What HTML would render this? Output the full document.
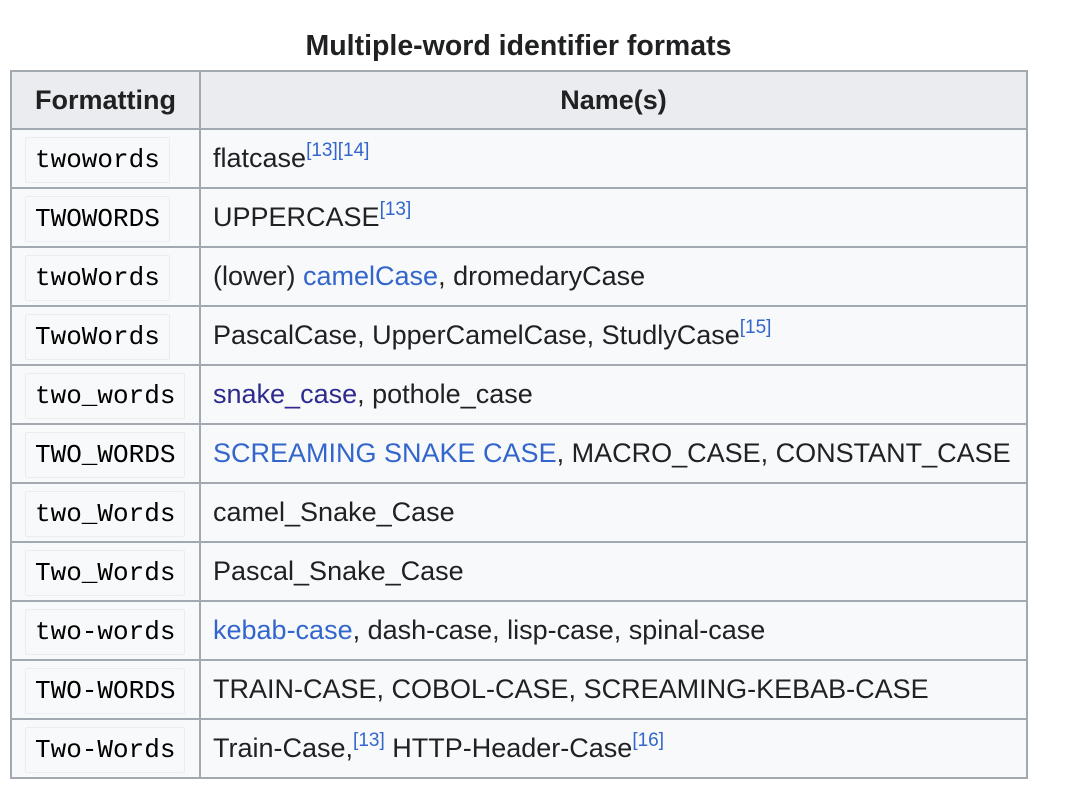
<!DOCTYPE html>
<html><head><meta charset="utf-8"><style>
body{margin:0;background:#fff;width:1080px;height:812px;overflow:hidden;font-family:"Liberation Sans",Arial,sans-serif;color:#202122}
.cap{position:absolute;left:10px;width:1017px;top:30px;text-align:center;font-weight:bold;font-size:28.5px}
table{position:absolute;left:10px;top:70px;border-collapse:collapse;background:#f8f9fa;font-size:27px;table-layout:fixed;width:1018px}
td,th{border:2px solid #a2a9b1;height:57px;padding:0 12px;vertical-align:middle;box-sizing:border-box;white-space:nowrap;overflow:hidden}
tr{height:59px}
th{background:#eaecf0;font-weight:bold;height:57px;font-size:27px}
th:first-child{width:189px;padding:0 10px}
td:first-child{padding:0 13px}
td:last-child{padding-left:12px;padding-right:0}
code{font-family:"Liberation Mono","DejaVu Sans Mono",monospace;font-size:26px;background:#f8f9fa;border:1px solid #eaecf0;border-radius:2px;padding:7px 9px;color:#000}
a{color:#3366cc}
.v{color:#2e2a8e}
sup{font-size:19px;color:#3366cc;vertical-align:0;position:relative;top:-11px;line-height:0}
</style></head><body>
<div class="cap">Multiple-word identifier formats</div>
<table>
<tr style="height:58px"><th>Formatting</th><th>Name(s)</th></tr>
<tr><td><code>twowords</code></td><td>flatcase<sup>[13][14]</sup></td></tr>
<tr><td><code>TWOWORDS</code></td><td>UPPERCASE<sup>[13]</sup></td></tr>
<tr><td><code>twoWords</code></td><td>(lower) <a>camelCase</a>, dromedaryCase</td></tr>
<tr><td><code>TwoWords</code></td><td>PascalCase, UpperCamelCase, StudlyCase<sup>[15]</sup></td></tr>
<tr><td><code>two_words</code></td><td><a class="v">snake_case</a>, pothole_case</td></tr>
<tr><td><code>TWO_WORDS</code></td><td><a>SCREAMING SNAKE CASE</a>, MACRO_CASE, CONSTANT_CASE</td></tr>
<tr><td><code>two_Words</code></td><td>camel_Snake_Case</td></tr>
<tr><td><code>Two_Words</code></td><td>Pascal_Snake_Case</td></tr>
<tr><td><code>two-words</code></td><td><a>kebab-case</a>, dash-case, lisp-case, spinal-case</td></tr>
<tr><td><code>TWO-WORDS</code></td><td>TRAIN-CASE, COBOL-CASE, SCREAMING-KEBAB-CASE</td></tr>
<tr><td><code>Two-Words</code></td><td>Train-Case,<sup>[13]</sup> HTTP-Header-Case<sup>[16]</sup></td></tr>
</table>
</body></html>
